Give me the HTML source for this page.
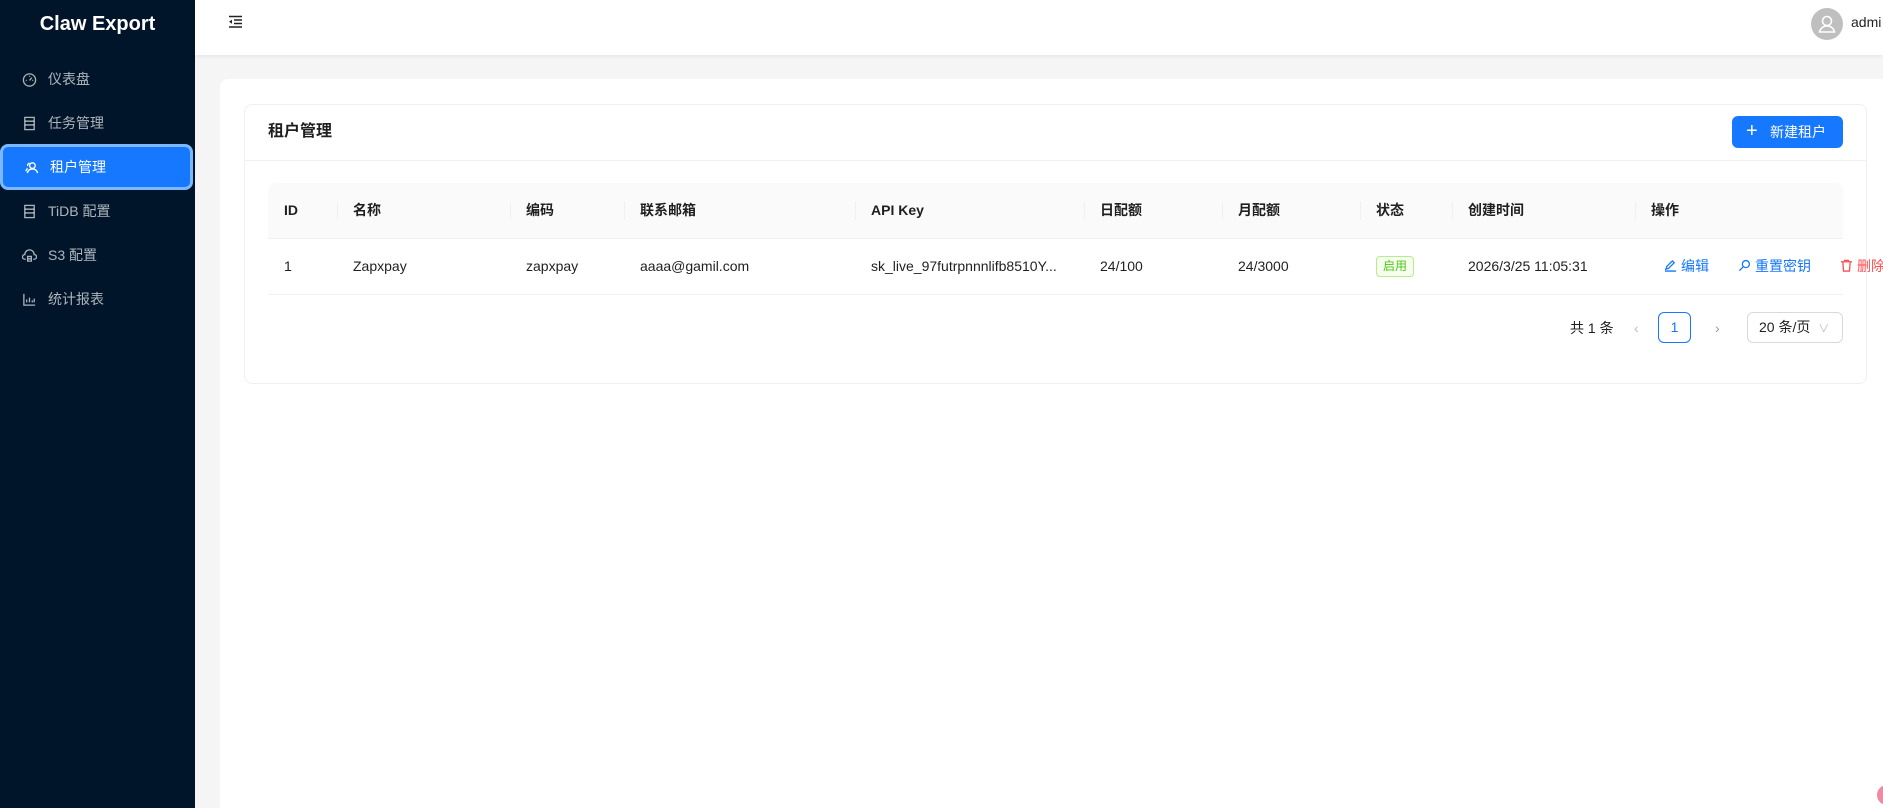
<!DOCTYPE html>
<html><head><meta charset="utf-8"><style>
*{box-sizing:border-box;margin:0;padding:0}
html,body{width:1883px;height:808px;overflow:hidden}
body{background:#f5f5f5;font-family:"Liberation Sans","Noto Sans CJK SC",sans-serif;font-size:14px;color:rgba(0,0,0,.88);position:relative}
.side{position:absolute;left:0;top:0;width:195px;height:808px;background:#001529}
.logo{height:48px;line-height:48px;text-align:center;color:#fff;font-weight:bold;font-size:20px}
.mi{position:absolute;left:4px;width:187px;height:40px;color:rgba(255,255,255,.68);font-size:14px;display:flex;align-items:center;padding-left:18px;border-radius:8px}
.mi svg{width:15px;height:15px;margin-right:11px;fill:none;stroke:currentColor;stroke-width:1.4}
.mi.sel{background:#1677ff;color:#fff;left:0;width:193px;height:46px;border:3px solid #7cb8ff;padding-left:21px}
.head{position:absolute;left:195px;top:0;right:0;height:55px;background:#fff;box-shadow:0 1px 4px rgba(0,21,41,.08)}
.outer{position:absolute;left:220px;top:79px;width:1700px;height:740px;background:#fff;border-radius:8px}
.card{position:absolute;left:244px;top:104px;width:1623px;height:280px;border:1px solid #f0f0f0;border-radius:8px;background:#fff}
.ch{height:56px;border-bottom:1px solid #f0f0f0;padding-left:23px;line-height:54px;font-size:16px;font-weight:bold}
.btn{position:absolute;left:1487px;top:11px;width:111px;height:32px;background:#1677ff;color:#fff;border-radius:6px;font-size:14px;line-height:32px;padding-left:38px}
.btn:before{content:"+";position:absolute;left:14px;top:-1px;font-size:20px;font-weight:300}
table{position:absolute;left:23px;top:78px;border-collapse:collapse;table-layout:fixed;width:1575px}
th{background:#fafafa;height:55px;text-align:left;font-weight:bold;padding-left:16px;position:relative;border-bottom:1px solid #f0f0f0}
th:first-child{border-top-left-radius:8px}th:last-child{border-top-right-radius:8px}
th+th:before{content:"";position:absolute;left:0;top:19px;height:18px;width:1px;background:#f0f0f0}
td{height:56px;padding-left:16px;border-bottom:1px solid #f0f0f0;white-space:nowrap;overflow:visible}
.tag{display:inline-block;border:1px solid #b7eb8f;background:#f6ffed;color:#52c41a;font-size:12px;line-height:19px;padding:0 6px;border-radius:4px}
.a{color:#1677ff;margin-right:29px}.d{color:#ff4d4f}
.a svg,.d svg{width:13px;height:13px;vertical-align:-1px;margin-right:4px;fill:none;stroke:currentColor;stroke-width:1.4}
.pg{position:absolute;top:207px;left:0;width:1623px;height:32px}
.pg span{position:absolute;top:0;line-height:32px}
</style></head><body>
<div class="side">
<div class="logo">Claw Export</div>
<div class="mi" style="top:59px"><svg viewBox="0 0 16 16"><circle cx="8" cy="8.5" r="6.5"/><path d="M8 9l2.5-3M4 9h1M11 9h1M8 4v1"/></svg>仪表盘</div>
<div class="mi" style="top:103px"><svg viewBox="0 0 16 16"><rect x="3" y="1.5" width="10" height="13"/><path d="M3 5.5h10M3 9.5h10"/></svg>任务管理</div>
<div class="mi sel" style="top:144px"><svg viewBox="0 0 16 16"><circle cx="9" cy="6" r="3"/><path d="M3.5 14c.5-3 3-4.5 5.5-4.5s5 1.5 5.5 4.5M6 3.5C4.5 3.5 3.5 5 4 6.5M2 12c.3-1.5 1-2.5 2-3"/></svg>租户管理</div>
<div class="mi" style="top:191px"><svg viewBox="0 0 16 16"><rect x="3" y="1.5" width="10" height="13"/><path d="M3 5.5h10M3 9.5h10"/></svg>TiDB 配置</div>
<div class="mi" style="top:235px"><svg viewBox="0 0 16 16"><path d="M4 12H3a2.5 2.5 0 0 1 0-5 5 5 0 0 1 10 0 2.5 2.5 0 0 1 0 5h-1M6 9h4v5H6zM6 11.5h4"/></svg>S3 配置</div>
<div class="mi" style="top:279px"><svg viewBox="0 0 16 16"><path d="M2 2v12h12M5 11V8M8 11V6M11 11V9M13 11V7"/></svg>统计报表</div>
</div>
<div class="head">
<svg style="position:absolute;left:33px;top:15px" width="15" height="14" viewBox="0 0 15 14" fill="none" stroke="#222" stroke-width="1.4"><path d="M1 1.5h13M6 5h8M6 8.5h8M1 12h13"/><path d="M1 6.8l3-2v4z" fill="#222" stroke="none"/></svg>
<div style="position:absolute;left:1616px;top:8px;width:32px;height:32px;border-radius:50%;background:#bfbfbf"><svg width="32" height="32" viewBox="0 0 32 32" fill="none" stroke="#fff" stroke-width="1.6"><circle cx="16" cy="13" r="4.5"/><path d="M8.5 24c1-4 4-6 7.5-6s6.5 2 7.5 6z"/></svg></div>
<div style="position:absolute;left:1656px;top:14px;font-size:14px">admi</div>
</div>
<div class="outer"></div>
<div class="card">
<div class="ch">租户管理</div>
<div class="btn">新建租户</div>
<table>
<colgroup><col style="width:69px"><col style="width:173px"><col style="width:114px"><col style="width:231px"><col style="width:229px"><col style="width:138px"><col style="width:138px"><col style="width:92px"><col style="width:183px"><col style="width:208px"></colgroup>
<tr><th>ID</th><th>名称</th><th>编码</th><th>联系邮箱</th><th>API Key</th><th>日配额</th><th>月配额</th><th>状态</th><th>创建时间</th><th>操作</th></tr>
<tr><td>1</td><td>Zapxpay</td><td>zapxpay</td><td>aaaa@gamil.com</td><td>sk_live_97futrpnnnlifb8510Y...</td><td>24/100</td><td>24/3000</td><td><span class="tag">启用</span></td><td>2026/3/25 11:05:31</td>
<td><span class="a" style="margin-left:13px"><svg viewBox="0 0 14 14"><path d="M2 11l1-3 6-6 2 2-6 6zM1 13h12"/></svg>编辑</span><span class="a"><svg viewBox="0 0 14 14"><circle cx="8.5" cy="5.5" r="3.8"/><path d="M6 8l-4.5 4.5"/></svg>重置密钥</span><span class="d"><svg viewBox="0 0 14 14"><path d="M1 3h12M5 3V1.5h4V3M3 3l.8 10h6.4L11 3"/></svg>删除</span></td></tr>
</table>
<div class="pg">
<span style="left:1325px">共 1 条</span>
<span style="left:1389px;color:#bbb">‹</span>
<span style="left:1413px;width:33px;height:31px;border:1px solid #1677ff;border-radius:6px;color:#1677ff;text-align:center;line-height:29px">1</span>
<span style="left:1470px;color:#999">›</span>
<span style="left:1502px;width:96px;height:31px;border:1px solid #d9d9d9;border-radius:6px;padding-left:11px;line-height:29px">20 条/页 <i style="font-style:normal;color:#bbb;font-size:11px;margin-left:4px">∨</i></span>
</div>
</div>
<div style="position:absolute;left:1877px;top:785px;width:20px;height:20px;border-radius:50%;background:#f08aa3"></div>
</body></html>
